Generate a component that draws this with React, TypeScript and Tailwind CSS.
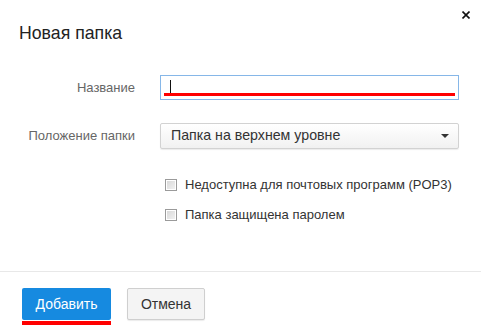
import { useState } from "react"

const font = { fontFamily: '"Liberation Sans", Arial, sans-serif' }

function Checkbox({ label }: { label: string }) {
  return (
    <label className="flex h-[20px] items-center gap-[8px] text-[13px] text-[#333]">
      <span className="h-[12px] w-[12px] border border-[#9a9a9a] bg-gradient-to-br from-[#d6d6d6] to-[#f4f4f4] shadow-[inset_0_0_0_1px_#fff]" />
      {label}
    </label>
  )
}

export default function App() {
  const [name, setName] = useState("")

  return (
    <div style={font} className="relative flex h-[335px] w-[481px] flex-col bg-white">
      {/* header */}
      <div className="pl-[19px] pt-[23px]">
        <h1 className="text-[17.7px] leading-[20px] text-[#222]">Новая папка</h1>
      </div>
      <button className="absolute right-[9px] top-[8px] flex h-[13px] w-[13px] items-center justify-center">
        <svg width="8" height="8" viewBox="0 0 8 8">
          <path d="M0.5 0.5 L7.5 7.5 M7.5 0.5 L0.5 7.5" stroke="#111" strokeWidth="1.6" />
        </svg>
      </button>

      {/* form */}
      <div className="mt-[32px] flex items-center">
        <div className="w-[135px] text-right text-[13px] text-[#666]">Название</div>
        <div className="relative ml-[25px] h-[25px] w-[299px] border border-[#86b7e8] bg-white">
          <input
            value={name}
            onChange={(e) => setName(e.target.value)}
            className="h-full w-full px-[9px] text-[14px] outline-none"
          />
          <span className="absolute left-[9px] top-[4px] h-[14px] w-px bg-[#111]" />
          <span className="absolute bottom-[3px] left-[3px] right-[3px] h-[3px] bg-[#f00]" />
        </div>
      </div>

      <div className="mt-[23px] flex items-center">
        <div className="w-[135px] text-right text-[13px] text-[#666]">Положение папки</div>
        <div className="ml-[25px] flex h-[26px] w-[299px] items-center justify-between rounded-[2px] border border-[#d2d2d2] bg-gradient-to-b from-white to-[#f1f1f1] pl-[10px] pr-[9px] text-[14.2px] text-[#333] shadow-[0_1px_1px_rgba(0,0,0,0.08)]">
          <span>Папка на верхнем уровне</span>
          <svg width="8" height="4" viewBox="0 0 8 4">
            <path d="M0 0 H8 L4 4 Z" fill="#333" />
          </svg>
        </div>
      </div>

      <div className="mt-[26px] flex flex-col gap-[10px] pl-[165px]">
        <Checkbox label="Недоступна для почтовых программ (POP3)" />
        <Checkbox label="Папка защищена паролем" />
      </div>

      {/* footer */}
      <div className="mt-auto h-[64px] border-t border-[#e8e8e8] pl-[22px] pt-[16px]">
        <div className="flex gap-[16px]">
          <div className="relative">
            <button className="h-[32px] w-[89px] rounded-[2px] bg-[#168ae0] text-[14px] text-white">
              Добавить
            </button>
            <span className="absolute left-0 right-0 top-[33px] h-[4px] bg-[#f00]" />
          </div>
          <button className="h-[32px] w-[78px] rounded-[2px] border border-[#cfcfcf] bg-[#f4f4f4] text-[14px] text-[#333] shadow-[0_1px_1px_rgba(0,0,0,0.08)]">
            Отмена
          </button>
        </div>
      </div>
    </div>
  )
}
